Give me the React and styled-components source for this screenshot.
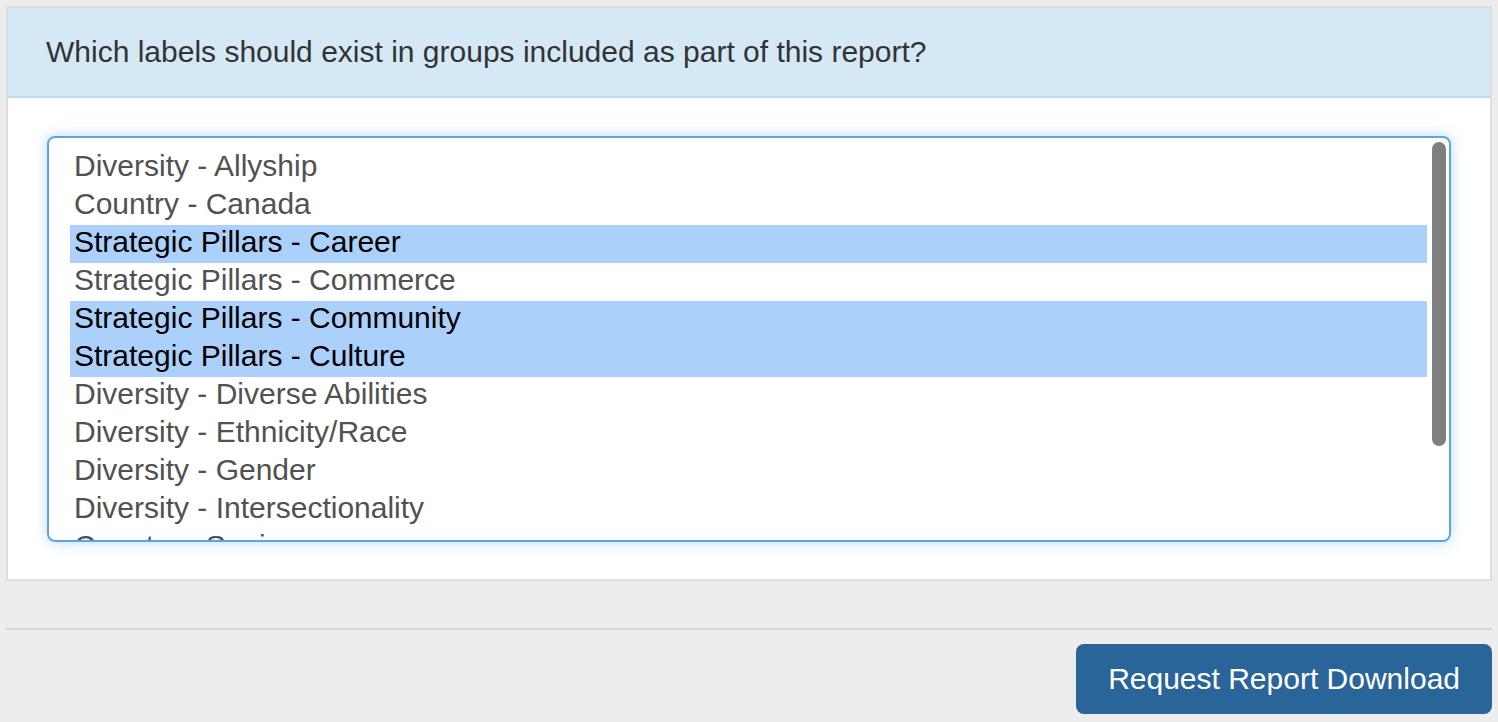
import React from "react";
import styled, { createGlobalStyle } from "styled-components";

const GlobalStyle = createGlobalStyle`
    html, body {
        margin: 0;
        padding: 0;
        background: #ededed;
    }
    body {
        font-family: "Liberation Sans", Arial, sans-serif;
    }
`;

const Page = styled.div`
    padding: 6px 6px 0;
    box-sizing: border-box;
    height: 722px;
    overflow: hidden;
`;

const Panel = styled.section`
    border: 2px solid #dedede;
    background: #fff;
`;

const PanelHeading = styled.div`
    background: #d4e9f5;
    border-bottom: 2px solid #b3e0ec;
    height: 88px;
    padding: 0 38px;
    display: flex;
    align-items: center;
    font-size: 30px;
    color: #333;
`;

const PanelBody = styled.div`
    padding: 38px 39px 37px;
`;

/* looks like a multi-select; drawn with divs so the rows stay put */
const LabelSelect = styled.div`
    position: relative;
    height: 406px;
    box-sizing: border-box;
    border: 2px solid #5ba5e5;
    border-radius: 8px;
    box-shadow: 0 0 14px rgba(102, 175, 233, 0.45);
    padding: 11px 22px 0 21px;
    overflow: hidden;
`;

const Option = styled.div`
    height: 38px;
    box-sizing: border-box;
    line-height: 34px;
    padding: 0 0 4px 4px;
    font-size: 30px;
    white-space: nowrap;
    color: ${(p) => (p.selected ? "#000" : "#515151")};
    background: ${(p) => (p.selected ? "#abd0fb" : "transparent")};
`;

const ScrollThumb = styled.div`
    position: absolute;
    top: 4px;
    right: 3px;
    width: 14px;
    height: 304px;
    border-radius: 7px;
    background: #7f7f7f;
`;

const Footer = styled.div`
    margin-top: 47px;
    border-top: 2px solid #d6d6d6;
    padding-top: 14px;
    display: flex;
    justify-content: flex-end;
`;

const RequestButton = styled.button`
    height: 70px;
    padding: 0 32px;
    border: none;
    border-radius: 8px;
    background: #2a6599;
    color: #fff;
    font-family: "Liberation Sans", Arial, sans-serif;
    font-size: 30px;
    cursor: pointer;
`;

const labels = [
    { name: "Diversity - Allyship" },
    { name: "Country - Canada" },
    { name: "Strategic Pillars - Career", selected: true },
    { name: "Strategic Pillars - Commerce" },
    { name: "Strategic Pillars - Community", selected: true },
    { name: "Strategic Pillars - Culture", selected: true },
    { name: "Diversity - Diverse Abilities" },
    { name: "Diversity - Ethnicity/Race" },
    { name: "Diversity - Gender" },
    { name: "Diversity - Intersectionality" },
    { name: "Country - Spain" },
    { name: "Country - United States" },
];

const App = () => {
    return (
        <>
            <GlobalStyle />
            <Page>
                <Panel>
                    <PanelHeading>
                        Which labels should exist in groups included as part of this report?
                    </PanelHeading>
                    <PanelBody>
                        <LabelSelect>
                            {labels.map((l) => (
                                <Option key={l.name} selected={l.selected}>
                                    {l.name}
                                </Option>
                            ))}
                            <ScrollThumb />
                        </LabelSelect>
                    </PanelBody>
                </Panel>
                <Footer>
                    <RequestButton>Request Report Download</RequestButton>
                </Footer>
            </Page>
        </>
    );
};

export default App;
